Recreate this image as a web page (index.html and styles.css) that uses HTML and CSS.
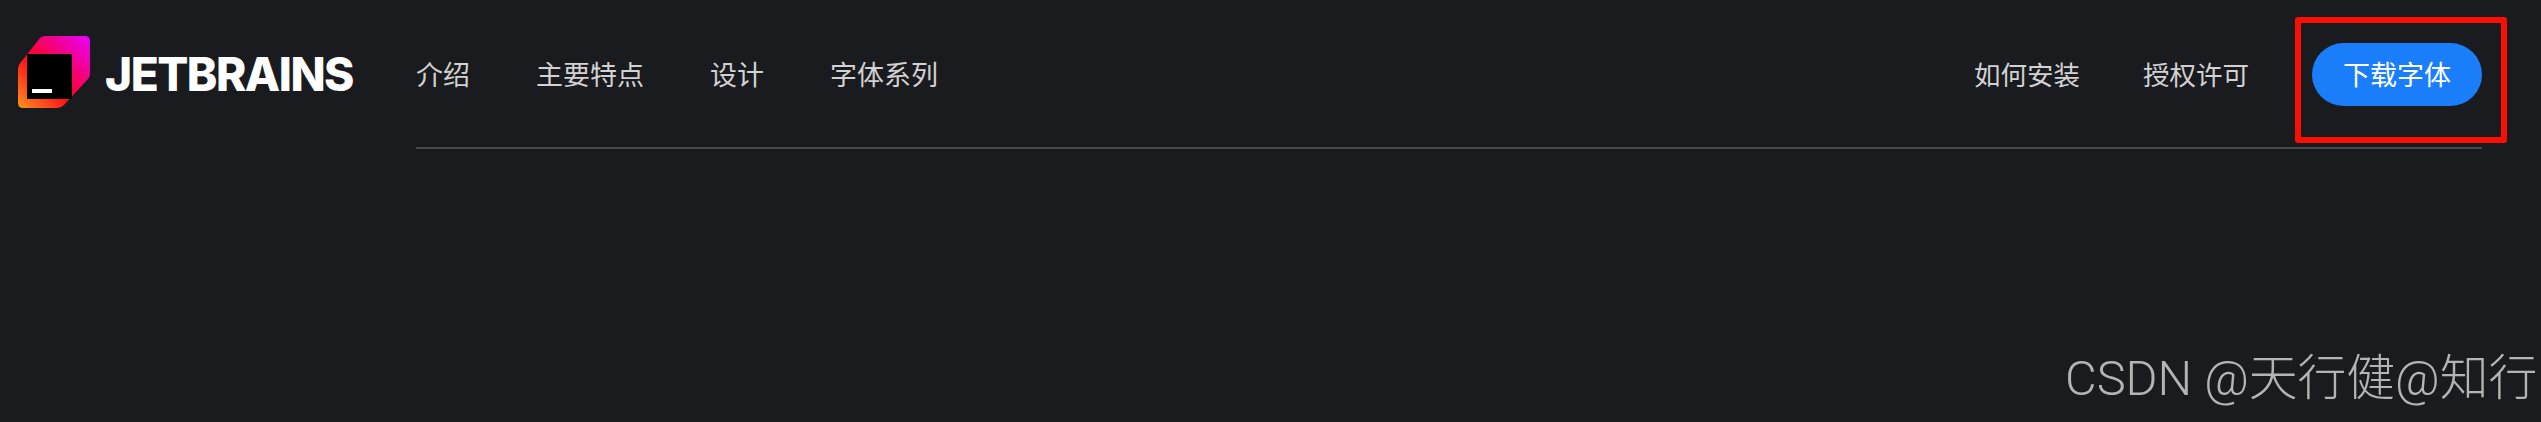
FILE: index.html
```html
<!DOCTYPE html>
<html lang="zh-CN">
<head>
    <meta charset="UTF-8">
    <meta name="viewport" content="width=device-width, initial-scale=1.0">
    <title>JetBrains Mono</title>
    <link rel="stylesheet" href="styles.css">
</head>
<body>
    <header class="site-header">
        <a class="logo" href="#">
            <svg class="logo-mark" viewBox="0 0 72 72" width="72" height="72">
                <defs>
                    <linearGradient id="logoGrad" x1="0" y1="72" x2="72" y2="0" gradientUnits="userSpaceOnUse">
                        <stop offset="0" stop-color="#ff9419"/>
                        <stop offset="0.43" stop-color="#ff021d"/>
                        <stop offset="1" stop-color="#e600ff"/>
                    </linearGradient>
                </defs>
                <path d="M27 0H67Q72 0 72 5V38Q72 41 70 43L47 68Q43 72 38 72H5Q0 72 0 67V33Q0 29 3 26L22 2Q24 0 27 0Z" fill="url(#logoGrad)"/>
                <rect x="9" y="18" width="45" height="45" fill="#000"/>
                <rect x="14" y="53" width="20" height="4" fill="#fff"/>
            </svg>
            <span class="logo-text">JETBRAINS</span>
        </a>
        <nav class="main-nav">
            <div class="nav-links">
                <a href="#">介绍</a>
                <a href="#">主要特点</a>
                <a href="#">设计</a>
                <a href="#">字体系列</a>
            </div>
            <div class="nav-links nav-right">
                <a href="#">如何安装</a>
                <a href="#">授权许可</a>
                <a class="download-btn" href="#">下载字体</a>
            </div>
        </nav>
    </header>

    <div class="mark-box"></div>
    <div class="watermark">CSDN @天行健@知行</div>
</body>
</html>
```

FILE: styles.css
```css
body {
    margin: 0;
    height: 422px;
    overflow: hidden;
    background-color: #1a1b1f;
    font-family: "Noto Sans CJK SC", "Liberation Sans", sans-serif;
}
a {
    color: inherit;
    text-decoration: none;
}
.site-header {
    display: flex;
    align-items: flex-start;
    padding: 36px 59px 0 18px;
}
.logo {
    flex: 0 0 398px;
    display: flex;
    align-items: center;
    gap: 15px;
}
.logo-mark {
    display: block;
}
.logo-text {
    font-family: Inter, "Liberation Sans", sans-serif;
    font-size: 46px;
    font-weight: 800;
    letter-spacing: -1.5px;
    color: #fff;
    line-height: 1;
    padding-top: 3px;
}
.main-nav {
    flex: 1;
    height: 113px;
    display: flex;
    justify-content: space-between;
    align-items: flex-start;
    padding-top: 7px;
    box-sizing: border-box;
    border-bottom: 2px solid #47484b;
}
.nav-links {
    display: flex;
    align-items: center;
    gap: 66px;
    height: 63px;
    font-size: 27px;
    color: #d2d2d2;
}
.nav-links a {
    padding-bottom: 2px;
}
.nav-right {
    font-size: 26.5px;
    gap: 63px;
}
.nav-links .download-btn {
    display: flex;
    align-items: center;
    box-sizing: border-box;
    height: 63px;
    padding: 0 31px 2px;
    border-radius: 32px;
    background-color: #1a7efb;
    font-size: 27px;
    color: #fff;
}
.mark-box {
    position: absolute;
    left: 2295px;
    top: 17px;
    width: 212px;
    height: 126px;
    box-sizing: border-box;
    border: 6px solid #fb0f05;
    border-radius: 3px;
}
.watermark {
    position: absolute;
    left: 2065px;
    top: 349px;
    font-family: Roboto, "Noto Sans CJK SC", sans-serif;
    font-size: 48.8px;
    font-weight: 300;
    line-height: 60px;
    white-space: nowrap;
    color: #b4b4b4;
}
```
